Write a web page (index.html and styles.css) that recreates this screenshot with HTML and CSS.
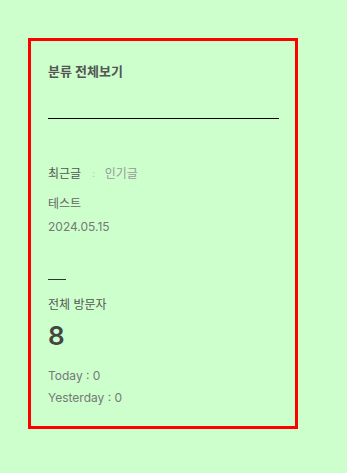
FILE: index.html
```html
<!DOCTYPE html>
<html lang="ko">
<head>
<meta charset="utf-8">
<link rel="stylesheet" href="styles.css">
</head>
<body>
<aside class="sidebar">
  <h2 class="cat-title">분류 전체보기</h2>
  <hr class="rule">
  <div class="tabs">
    <span class="tab active">최근글</span>
    <span class="sep">:</span>
    <span class="tab">인기글</span>
  </div>
  <div class="post-title">테스트</div>
  <div class="post-date">2024.05.15</div>
  <hr class="short-rule">
  <div class="visit-label">전체 방문자</div>
  <div class="visit-total">8</div>
  <div class="visit-today">Today : 0</div>
  <div class="visit-yesterday">Yesterday : 0</div>
</aside>
</body>
</html>
```
FILE: styles.css
```css
html, body {
  margin: 0;
  padding: 0;
  background: #ccffcc;
}
body {
  font-family: Inter, "Noto Sans CJK KR", sans-serif;
  color: #555;
  padding: 38px 0 0 28px;
}
.sidebar {
  box-sizing: border-box;
  width: 270px;
  height: 391px;
  border: 3px solid #ff0000;
  padding: 20px 16px 0 17px;
}
.cat-title {
  margin: 0;
  font-size: 13px;
  font-weight: 700;
  line-height: 20px;
  color: #555;
}
.rule {
  margin: 37px 0 0;
  border: 0;
  height: 1px;
  background: #000;
}
.tabs {
  margin-top: 45px;
  font-size: 12px;
  line-height: 20px;
  display: flex;
  align-items: center;
}
.tab { color: #999; }
.tab.active { color: #555; }
.sep {
  color: #bbb;
  font-size: 9px;
  margin: 0 10px 0 11px;
}
.post-title {
  margin-top: 11px;
  font-size: 12px;
  line-height: 18px;
  color: #666;
}
.post-date {
  margin-top: 5px;
  font-size: 12px;
  line-height: 18px;
  color: #777;
}
.short-rule {
  margin: 43px 0 0;
  border: 0;
  width: 18px;
  height: 1px;
  background: #333;
}
.visit-label {
  margin-top: 15px;
  font-size: 12px;
  line-height: 20px;
  color: #555;
}
.visit-total {
  margin-top: 5px;
  font-size: 26px;
  font-weight: 600;
  line-height: 32px;
  color: #444;
}
.visit-today {
  margin-top: 14px;
  font-size: 12px;
  line-height: 20px;
  color: #777;
}
.visit-yesterday {
  margin-top: 2px;
  font-size: 12px;
  line-height: 20px;
  color: #777;
}
```
